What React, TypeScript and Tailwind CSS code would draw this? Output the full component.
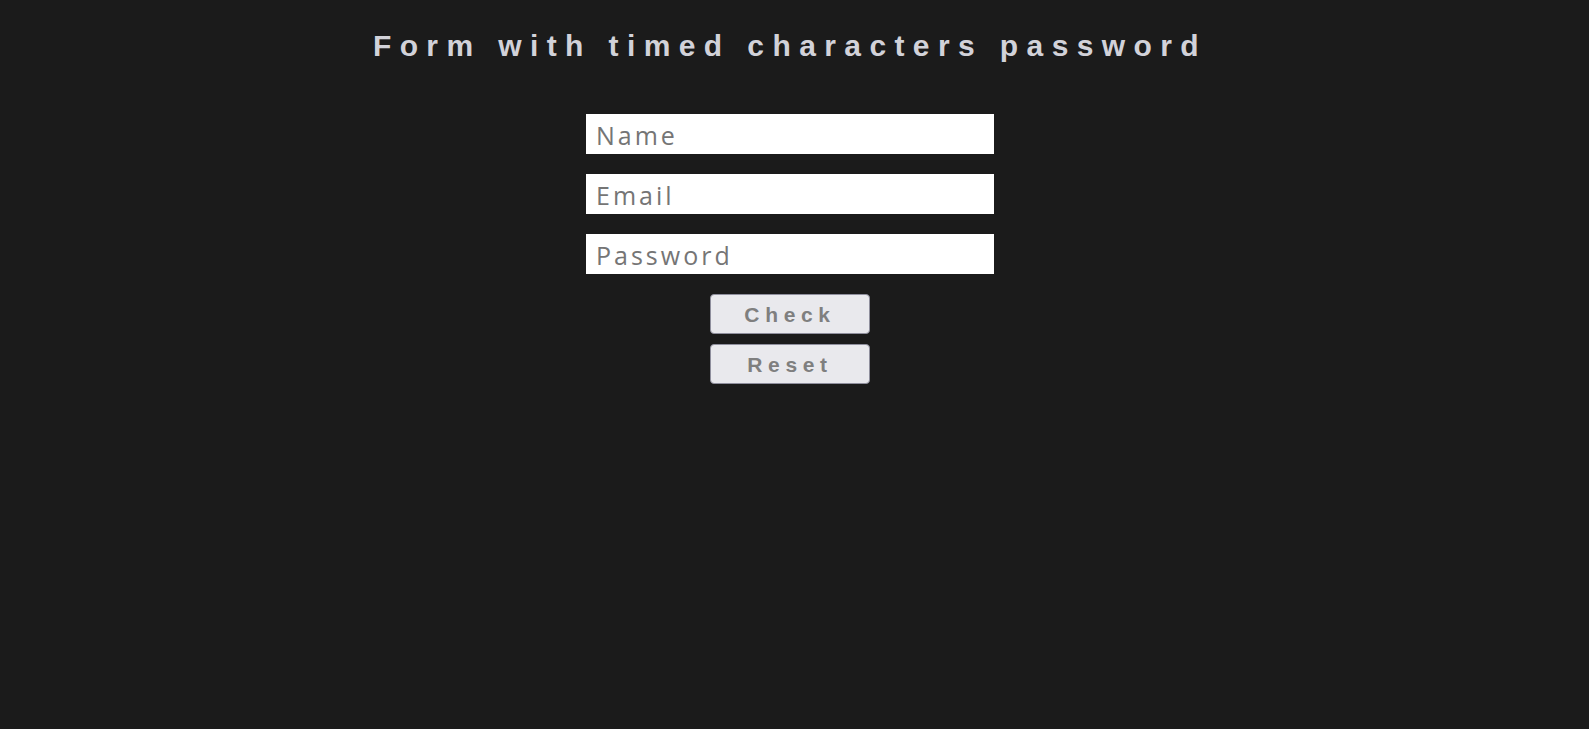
import React, { useState } from 'react';

const App: React.FC = () => {
  const [name, setName] = useState('');
  const [email, setEmail] = useState('');
  const [password, setPassword] = useState('');

  const reset = () => {
    setName('');
    setEmail('');
    setPassword('');
  };

  const inputCls =
    "w-[408px] h-[40px] bg-white px-[10px] pt-[2px] text-[25px] tracking-[3px] text-[#333] placeholder:text-[#757575] outline-none font-['Open_Sans',sans-serif]";
  const buttonCls =
    "w-[160px] h-[40px] bg-[#e9e9ed] border border-[#8f8f9d] rounded-[4px] pt-[2px] text-[21px] font-bold tracking-[0.27em] text-[#7f7f7f] font-['Liberation_Sans',Arial,sans-serif]";

  return (
    <div className="min-h-[729px] w-full bg-[#1b1b1b] pr-[9px]">
      <div className="flex flex-col items-center pt-[28px]">
        <h1 className="text-[30px] font-bold tracking-[0.28em] text-[#d2d2d9] font-['Liberation_Sans',Arial,sans-serif] leading-[36px]">
          Form with timed characters password
        </h1>
        <form
          className="mt-[50px] flex flex-col items-center gap-[20px]"
          onSubmit={(e) => e.preventDefault()}
        >
          <input className={inputCls} placeholder="Name" value={name} onChange={(e) => setName(e.target.value)} />
          <input className={inputCls} placeholder="Email" value={email} onChange={(e) => setEmail(e.target.value)} />
          <input className={inputCls} placeholder="Password" value={password} onChange={(e) => setPassword(e.target.value)} />
          <div className="flex flex-col items-center gap-[10px]">
            <button type="submit" className={buttonCls}>Check</button>
            <button type="button" className={buttonCls} onClick={reset}>Reset</button>
          </div>
        </form>
      </div>
    </div>
  );
};

export default App;
